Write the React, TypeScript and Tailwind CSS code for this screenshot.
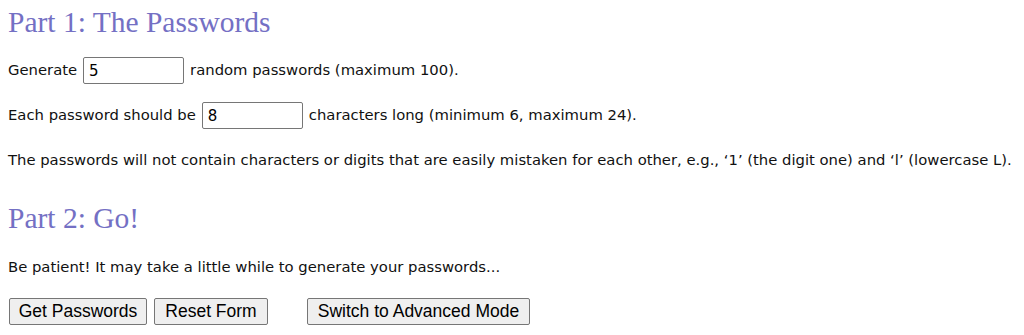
import React from "react";

const body = { fontFamily: '"DejaVu Sans", Verdana, sans-serif' };
const serif = { fontFamily: '"Liberation Serif", Georgia, serif' };

export default function App() {
  return (
    <div className="bg-white w-[1024px] h-[335px] overflow-hidden px-2 text-[#111] text-[14.8px]" style={body}>
      <div className="h-[46px] flex items-center">
        <h2 className="text-[29.5px] text-[#7470c4] leading-none" style={serif}>
          Part 1: The Passwords
        </h2>
      </div>
      <div className="mt-[11px] h-[27px] flex items-center">
        <span>Generate</span>
        <input
          defaultValue="5"
          className="mx-[6px] w-[101px] h-[27px] border border-[#767676] rounded-[2px] px-[5px] text-[15px] text-black outline-none"
          style={body}
        />
        <span>random passwords (maximum 100).</span>
      </div>
      <div className="mt-[18px] h-[27px] flex items-center">
        <span>Each password should be</span>
        <input
          defaultValue="8"
          className="mx-[6px] w-[101px] h-[27px] border border-[#767676] rounded-[2px] px-[5px] text-[15px] text-black outline-none"
          style={body}
        />
        <span>characters long (minimum 6, maximum 24).</span>
      </div>
      <div className="mt-[18px] h-[27px] flex items-center whitespace-nowrap">
        The passwords will not contain characters or digits that are easily mistaken for each other, e.g., ‘1’ (the digit one) and ‘l’ (lowercase L).
      </div>
      <div className="mt-[22px] h-[46px] flex items-center">
        <h2 className="text-[29.5px] text-[#7470c4] leading-none" style={serif}>
          Part 2: Go!
        </h2>
      </div>
      <div className="mt-[12px] h-[27px] flex items-center">
        Be patient! It may take a little while to generate your passwords...
      </div>
      <div className="mt-[17px] flex items-center" style={{ fontFamily: '"Liberation Sans", Arial, sans-serif' }}>
        <button className="h-[27px] w-[138px] ml-px bg-[#efefef] border border-[#767676] rounded-[2px] text-[17.5px] text-black leading-none">
          Get Passwords
        </button>
        <button className="h-[27px] w-[114px] ml-[7px] bg-[#efefef] border border-[#767676] rounded-[2px] text-[17.5px] text-black leading-none">
          Reset Form
        </button>
        <button className="h-[27px] w-[223px] ml-[39px] bg-[#efefef] border border-[#767676] rounded-[2px] text-[17.5px] text-black leading-none">
          Switch to Advanced Mode
        </button>
      </div>
    </div>
  );
}
